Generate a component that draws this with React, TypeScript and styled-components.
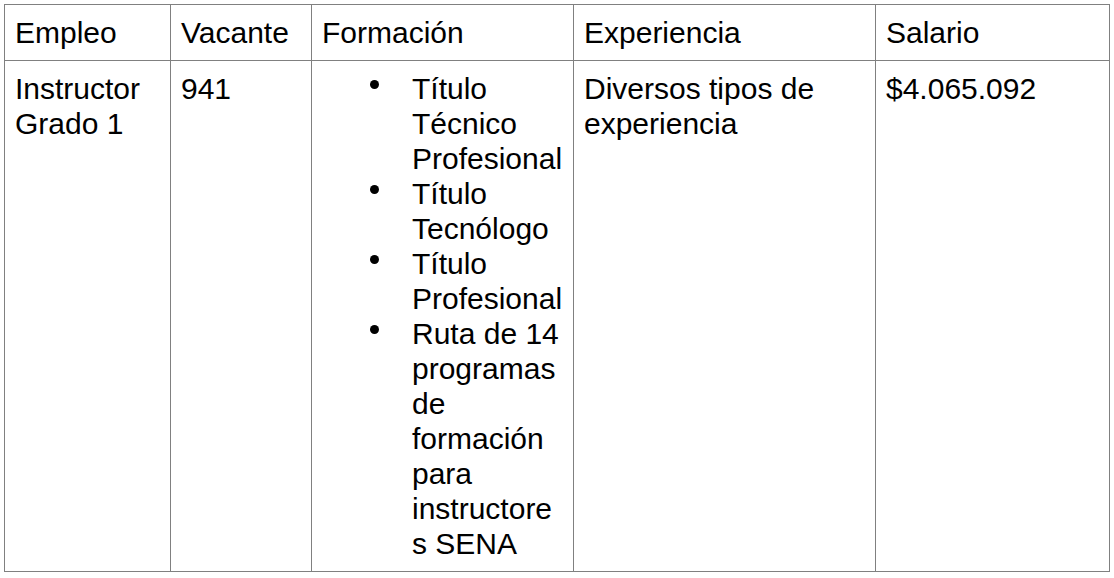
import React from "react";
import styled, { createGlobalStyle } from "styled-components";

const GlobalStyle = createGlobalStyle`
  html, body {
    margin: 0;
    padding: 0;
    background: #ffffff;
  }
  body {
    font-family: "Liberation Sans", Arial, Helvetica, sans-serif;
    color: #000000;
  }
`;

const Page = styled.div`
  padding: 4px 0 0 4px;
`;

const Table = styled.table`
  border-collapse: collapse;
  table-layout: fixed;
  width: 1105px;
  font-family: "Liberation Sans", Arial, Helvetica, sans-serif;
  font-size: 30px;
  line-height: 35px;
  color: #000;
`;

const Cell = styled.td`
  border: 1px solid #808080;
  padding: 10px 8px 10px 10px;
  vertical-align: top;
  text-align: left;
  font-weight: normal;
  overflow-wrap: anywhere;
`;

const BulletList = styled.ul`
  list-style: none;
  margin: 0;
  padding: 0 0 0 48px;
`;

const BulletItem = styled.li`
  display: grid;
  grid-template-columns: 42px 153px;
`;

const Bullet = styled.span`
  width: 9px;
  height: 9px;
  margin-top: 9px;
  border-radius: 50%;
  background: #000;
`;

const ItemText = styled.span`
  overflow-wrap: anywhere;
`;

const widths = [166, 141, 262, 302, 234];
const headers = ["Empleo", "Vacante", "Formación", "Experiencia", "Salario"];
const formacion = [
  "Título Técnico Profesional",
  "Título Tecnólogo",
  "Título Profesional",
  "Ruta de 14 programas de formación para instructores SENA",
];

export default function App() {
  return (
    <>
      <GlobalStyle />
      <Page>
        <Table>
          <colgroup>
            {widths.map((w, i) => (
              <col key={i} style={{ width: w }} />
            ))}
          </colgroup>
          <thead>
            <tr>
              {headers.map((h) => (
                <Cell as="th" key={h}>
                  {h}
                </Cell>
              ))}
            </tr>
          </thead>
          <tbody>
            <tr>
              <Cell>Instructor Grado 1</Cell>
              <Cell>941</Cell>
              <Cell>
                <BulletList>
                  {formacion.map((f) => (
                    <BulletItem key={f}>
                      <Bullet />
                      <ItemText>{f}</ItemText>
                    </BulletItem>
                  ))}
                </BulletList>
              </Cell>
              <Cell>Diversos tipos de experiencia</Cell>
              <Cell>$4.065.092</Cell>
            </tr>
          </tbody>
        </Table>
      </Page>
    </>
  );
}
